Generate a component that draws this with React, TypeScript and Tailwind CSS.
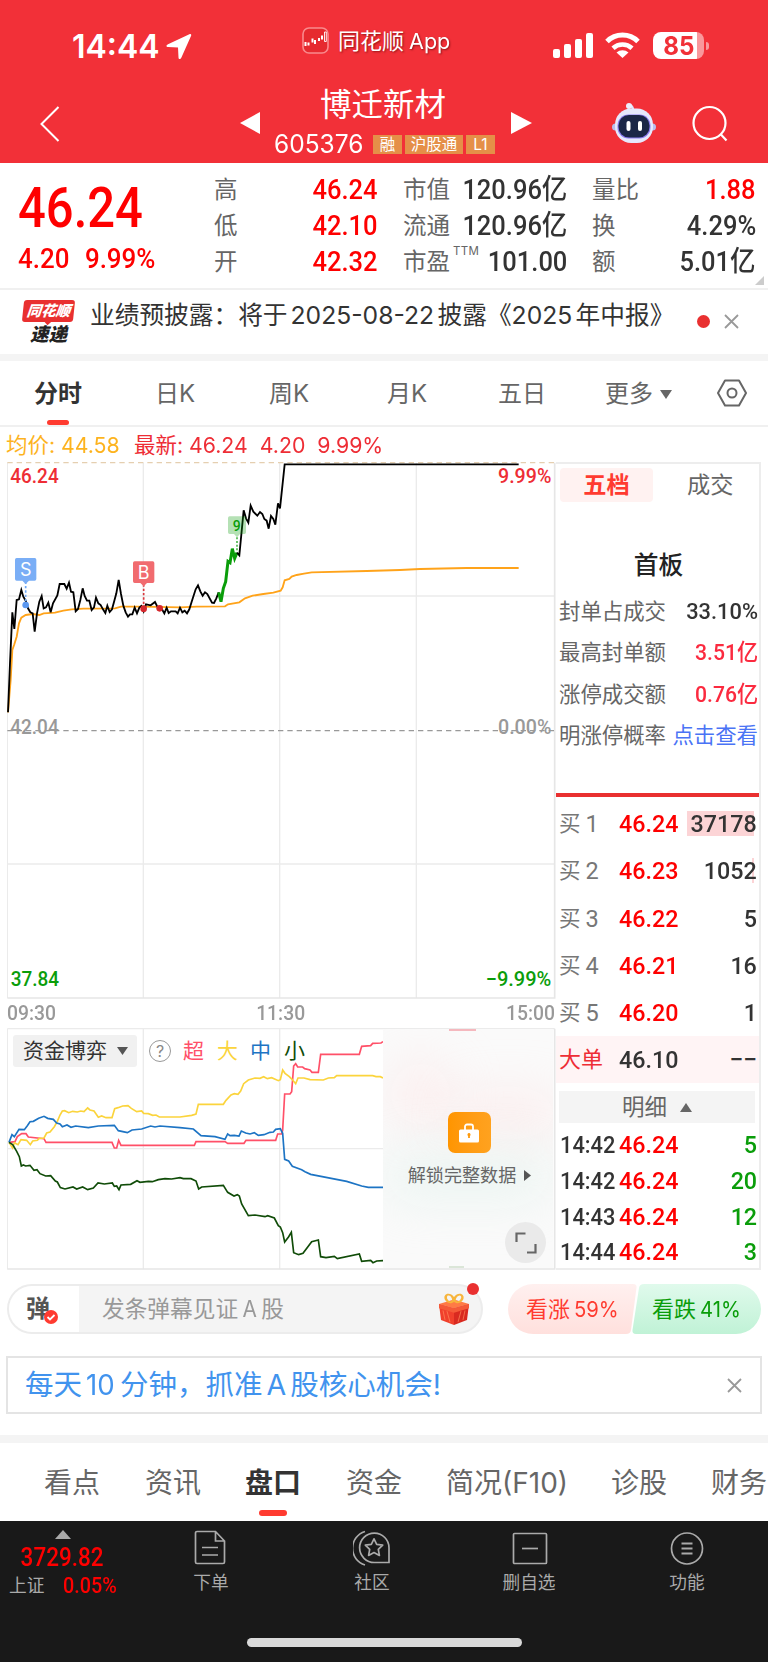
import clsx from "clsx";

const din = "[font-family:Roboto,'Noto_Sans_CJK_SC',sans-serif] font-medium";

const pricePath =
  "24,787 30,640 37,487 43,537 50,450 57,448 64,420 70,440 77,452 84,475 91,487 98,490 104,545 111,490 118,455 125,438 131,475 138,472 145,458 152,487 159,460 172,436 179,402 193,402 200,416 207,398 213,425 220,427 227,484 234,477 241,450 248,415 254,438 261,452 268,452 275,480 282,472 288,443 295,460 302,465 309,478 316,489 322,467 329,486 336,478 343,452 349,430 356,390 363,432 370,467 377,487 384,500 390,493 397,493 404,473 411,490 418,473 424,468 431,484 438,463 452,466 465,456 472,470 479,474 486,478 493,490 500,473 506,489 513,484 527,484 533,490 540,473 547,487 554,482 561,490 568,478 575,455 587,418 594,406 601,424 608,437 615,427 622,432 636,458 642,459 649,445 656,427";
const surgePath = "656,427 663,455 670,415 677,395 684,334 690,338 697,296 704,325 711,308";
const limitPath =
  "711,308 718,316 731,181 738,205 745,218 752,167 760,185 772,197 780,186 787,192 793,207 800,212 806,236 813,198 820,207 826,224 834,160 840,175 854,43 1556,43";
const avgPath =
  "24,787 32,690 37,600 43,583 50,560 57,520 64,503 77,495 98,492 118,495 131,490 165,488 190,482 215,478 250,476 345,475 363,470 430,470 540,472 590,470 675,469 684,463 718,457 735,445 758,437 790,432 820,428 842,422 848,412 854,391 868,387 875,380 890,375 912,371 935,367 1100,363 1200,360 1260,357 1400,354 1556,354";

const flows = [
  {
    color: "#ff5068",
    points:
      "27,547 45,545 52,530 65,521 78,521 85,531 132,536 138,547 336,547 343,564 350,564 356,541 363,556 583,556 588,545 675,545 683,550 732,550 738,541 827,541 833,522 845,522 848,510 854,402 870,402 875,395 881,318 887,311 893,321 908,321 914,326 930,330 936,337 955,337 962,283 1078,283 1085,259 1112,257 1118,250 1143,249 1149,245",
  },
  {
    color: "#fbd43c",
    points:
      "27,547 38,564 43,548 54,554 63,539 80,541 91,554 98,543 112,541 118,535 132,534 140,519 150,516 163,500 172,484 180,465 187,453 194,452 206,458 218,454 232,456 242,453 252,455 263,444 270,450 282,453 295,472 305,468 318,473 336,473 344,446 354,443 368,438 384,437 394,445 410,455 425,453 431,460 445,461 458,466 468,465 478,471 540,471 575,466 588,462 595,433 670,433 678,421 693,405 703,401 714,403 722,393 731,371 745,360 765,354 780,355 791,350 802,356 815,353 835,362 841,359 848,330 855,340 868,350 876,358 887,371 894,354 912,354 930,359 970,360 985,354 1003,353 1010,347 1118,347 1128,350 1141,350 1149,354",
  },
  {
    color: "#1d74c4",
    points:
      "27,547 36,524 43,530 57,508 73,509 82,497 90,485 100,484 116,475 132,469 143,475 160,478 170,489 180,492 187,500 201,495 213,502 227,498 265,503 295,498 343,496 355,512 382,518 396,510 425,507 452,498 465,501 480,498 540,503 580,507 603,527 645,530 675,538 683,522 690,527 703,526 717,528 724,513 737,519 750,522 763,518 775,526 792,524 810,517 820,516 827,508 841,506 848,520 854,598 866,603 877,619 905,629 915,635 932,643 1040,664 1085,678 1105,682 1149,682",
  },
  {
    color: "#104c08",
    points:
      "27,547 38,554 50,574 58,590 64,618 70,615 77,618 90,616 102,631 111,629 120,641 137,648 152,647 166,663 172,666 181,683 195,687 219,681 230,687 248,681 263,689 280,684 294,669 313,672 337,669 343,679 350,678 357,689 363,675 392,673 411,662 420,667 445,664 457,665 475,659 495,656 515,657 540,653 550,656 573,656 588,663 596,687 605,681 670,676 683,697 702,708 712,704 718,708 725,732 745,767 765,765 795,770 803,767 823,774 835,797 841,801 848,818 854,846 866,830 874,817 881,878 896,884 909,880 935,845 955,840 962,890 978,893 1003,889 1012,896 1078,882 1085,904 1112,901 1119,908 1130,903 1149,902",
  },
];

const limitInfo = [
  ["封单占成交", "33.10%", "scale-x-[.97] text-[#333]"],
  ["最高封单额", "3.51亿", "scale-x-[.94] text-[#fb2a3f]"],
  ["涨停成交额", "0.76亿", "scale-x-[.94] text-[#fb2a3f]"],
];

const bids = [
  ["1", "46.24", "37178"],
  ["2", "46.23", "1052"],
  ["3", "46.22", "5"],
  ["4", "46.21", "16"],
  ["5", "46.20", "1"],
];

const trades = [
  ["14:42", "5"],
  ["14:42", "20"],
  ["14:43", "12"],
  ["14:44", "3"],
];

function StatusBar() {
  return (
    <div className="flex h-[86px] items-start text-white">
      <div className="ml-[72px] mt-[31px] w-[94px] text-[32px] leading-[32px] font-semibold">
        <span className="inline-block origin-left">14:44</span>
      </div>
      <svg className="mt-[33px] h-[27px] w-[26px]" viewBox="0 0 26 27" fill="#fff">
        <path d="M23.4 1.2 2 11.3C-.2 12.4 .2 14 2.1 14.1L12 14.6 12.5 24.5C12.6 26.5 14.4 26.7 15.3 24.7L25 3C25.7 1.4 24.8 .6 23.4 1.2Z" />
      </svg>
      <svg className="mt-[27px] ml-[110px] h-[27px] w-[27px]" viewBox="0 0 27 27">
        <rect x="1" y="1" width="25" height="25" rx="6" fill="#e62a2f" stroke="#f98a8d" strokeWidth="1.6" />
        <g stroke="#fff" fill="none">
          <path d="M3.500 15v4M6.500 15.500v3M10.500 11.500v4M13 13v4M17 11v3M20 8.500v4" strokeWidth="2" />
          <path d="M22.500 5v9.500h1.800V5z" strokeWidth=".9" />
        </g>
      </svg>
      <div className="ml-[9px] mt-[26px] w-[215px] whitespace-nowrap text-[22px] leading-[30px] [text-shadow:1px_1px_2px_rgba(80,0,0,.6)]">
        同花顺<span className="ml-[5px] inline-block origin-left scale-x-[.98]">App</span>
      </div>
      <svg className="mt-[33px] h-[26px] w-[40px]" viewBox="0 0 40 26" fill="#fff">
        <rect x="0" y="16" width="7" height="9" rx="2" />
        <rect x="11" y="11" width="7" height="14" rx="2" />
        <rect x="22" y="6" width="7" height="19" rx="2" />
        <rect x="33" y="0" width="7" height="25" rx="2" />
      </svg>
      <svg className="ml-[12px] mt-[32px] h-[26px] w-[35px]" viewBox="0 0 35 26" fill="none" stroke="#fff">
        <path d="M2 9.500A22 22 0 0 1 33 9.500" strokeWidth="5" />
        <path d="M8 16.200A14 14 0 0 1 27 16.200" strokeWidth="4.600" />
        <path d="M17.500 26 11.500 20.500A9 9 0 0 1 23.500 20.500Z" fill="#fff" stroke="none" />
      </svg>
      <div className="ml-[13px] mt-[32px] flex h-[27px] w-[51px] items-center justify-center rounded-[8px] bg-linear-to-r from-white from-86% to-[#f9989c] to-86% text-[26px] leading-none font-bold text-[#f13037]">
        <span className="inline-block scale-x-[.93]">85</span>
      </div>
      <div className="ml-[2px] mt-[42px] h-[8px] w-[3px] rounded-r-full bg-[#f9989c]" />
    </div>
  );
}

function Robot() {
  return (
    <svg className="h-[42px] w-[44px]" viewBox="0 0 44 42">
      <path d="M21 8c0-3-1-4-3-5" stroke="#dfe3fb" strokeWidth="2.5" fill="none" />
      <circle cx="17" cy="4" r="3" fill="#eceefd" />
      <circle cx="3.5" cy="25" r="3.5" fill="#b9bdee" />
      <circle cx="40.5" cy="25" r="3.5" fill="#b9bdee" />
      <rect x="3" y="6.500" width="38" height="34.500" rx="16" fill="#e6e8fc" />
      <rect x="5.500" y="12.500" width="33" height="24" rx="11" fill="#8c7cf0" />
      <rect x="6.500" y="13" width="31" height="22.500" rx="10.500" fill="#1b2646" />
      <rect x="14.500" y="19" width="4" height="10" rx="2" fill="#fff" />
      <rect x="26" y="19" width="4" height="10" rx="2" fill="#fff" />
    </svg>
  );
}

function Header() {
  return (
    <header className="h-[163px] bg-[#f23038] text-white">
      <StatusBar />
      <div className="flex h-[77px] items-start">
        <svg className="mt-[19px] ml-[40px] h-[38px] w-[20px]" viewBox="0 0 20 38" fill="none" stroke="#fff" strokeWidth="2">
          <path d="M18.500 2 1.500 19 18.500 36" />
        </svg>
        <svg className="mt-[26px] ml-[180px] h-[22px] w-[20px]" viewBox="0 0 20 22" fill="#fff">
          <path d="M20 0v22L0 11z" />
        </svg>
        <div className="ml-[14px] w-[222px]">
          <div className="ml-[46px] text-[31.500px] leading-[38px]">博迁新材</div>
          <div className="mt-[10px] flex h-[20px] items-center">
            <span className="w-[99px] text-[25px] leading-[20px]">
              <span className="inline-block origin-left scale-x-[.98]">605376</span>
            </span>
            <div className="flex gap-[3px] text-[15.500px] leading-[19px]">
              <span className="w-[29px] bg-[#e58f48] text-center">融</span>
              <span className="w-[58px] bg-[#e58f48] text-center">沪股通</span>
              <span className="w-[29px] bg-[#e58f48] text-center">L1</span>
            </div>
          </div>
        </div>
        <svg className="mt-[26px] ml-[15px] h-[22px] w-[21px]" viewBox="0 0 21 22" fill="#fff">
          <path d="M0 0v22l21-11z" />
        </svg>
        <div className="mt-[16px] ml-[80px]">
          <Robot />
        </div>
        <svg className="mt-[19px] ml-[35px] h-[38px] w-[38px]" viewBox="0 0 38 38" fill="none" stroke="#fff" strokeWidth="2.2">
          <circle cx="18.5" cy="18" r="16" />
          <path d="m29.500 29 6 6.500" />
        </svg>
      </div>
    </header>
  );
}

function Stat({ label, value, red, sup }: { label: string; value: string; red?: boolean; sup?: string }) {
  return (
    <div className="flex h-[36px] items-center justify-between">
      <span className="flex items-start text-[23.500px] leading-[36px] text-[#666]">
        {label}
        {sup && <span className="mt-px ml-[3px] text-[11.500px] leading-[13px] tracking-[.3px]">{sup}</span>}
      </span>
      <span className={clsx(din, "origin-right scale-x-[.91] text-[28px] leading-[36px]", red ? "text-[#fe0000]" : "text-[#333]")}>
        {value}
      </span>
    </div>
  );
}

function Quote() {
  return (
    <section className="relative flex h-[127px] border-b-2 border-[#f0f0f0] pt-[9px]">
      <div className={clsx(din, "ml-[18px] w-[196px] text-[#fe0000]")}>
        <div className="mt-[8px] origin-left scale-x-[.89] text-[55px] leading-[56px]">46.24</div>
        <div className="mt-[5px] flex origin-left scale-x-[.91] gap-[17px] text-[28.500px] leading-[36px]">
          <span>4.20</span>
          <span>9.99%</span>
        </div>
      </div>
      <div className="w-[163px]">
        <Stat label="高" value="46.24" red />
        <Stat label="低" value="42.10" red />
        <Stat label="开" value="42.32" red />
      </div>
      <div className="ml-[26px] w-[164px]">
        <Stat label="市值" value="120.96亿" />
        <Stat label="流通" value="120.96亿" />
        <Stat label="市盈" value="101.00" sup="TTM" />
      </div>
      <div className="ml-[25px] w-[164px]">
        <Stat label="量比" value="1.88" red />
        <Stat label="换" value="4.29%" />
        <Stat label="额" value="5.01亿" />
      </div>
      <svg className="absolute right-[4px] bottom-[3px] h-[9px] w-[9px]" viewBox="0 0 9 9" fill="#ccc">
        <path d="M9 0v9H0z" />
      </svg>
    </section>
  );
}

function Close({ className }: { className?: string }) {
  return (
    <svg className={clsx("h-[15px] w-[15px]", className)} viewBox="0 0 15 15" stroke="#999" strokeWidth="1.8">
      <path d="m1 1 13 13M14 1 1 14" />
    </svg>
  );
}

function News() {
  return (
    <section className="flex h-[64px] items-start">
      <div className="ml-[23px] mt-[10px] w-[51px] font-black italic">
        <div className="relative z-10 h-[22px] -skew-x-6 rounded-[3px] bg-[#e93030] text-center text-[14.500px] leading-[21px] text-white">
          同花顺
          <div className="absolute bottom-[-2px] left-[23px] h-[6px] w-[6px] rotate-45 bg-[#e93030]" />
        </div>
        <div className="mt-[2px] text-center text-[18.500px] leading-[20px] text-[#222]">速递</div>
      </div>
      <div className="ml-[16px] mt-[6px] w-[605px] whitespace-nowrap text-[24.700px] leading-[38px] text-[#333]">
        业绩预披露：将于
        <span className="ml-[3px] mr-[3px] inline-block w-[144px]">2025-08-22</span>
        披露《<span className="mr-[3px] inline-block w-[61px]">2025</span>年中报》
      </div>
      <div className="mt-[25px] ml-[2px] h-[13px] w-[13px] rounded-full bg-[#e93030]" />
      <Close className="mt-[24px] ml-[14px]" />
    </section>
  );
}

function PeriodTabs() {
  return (
    <nav className="flex h-[73px] items-start border-t-[7px] border-b-2 border-b-[#f0f0f0] border-t-[#f4f4f4] text-[24px] leading-[66px] whitespace-nowrap text-[#666]">
      <div className="relative ml-[34px] w-[121px] font-bold text-[#333]">
        分时
        <div className="absolute left-[13px] top-[59px] h-[5px] w-[22px] rounded-full bg-[#ff3b30]" />
      </div>
      <div className="w-[114px]">日K</div>
      <div className="w-[118px]">周K</div>
      <div className="w-[111px]">月K</div>
      <div className="w-[107px]">五日</div>
      <div className="flex w-[112px] items-center">
        更多
        <svg className="ml-[7px] h-[9px] w-[12px]" viewBox="0 0 12 9" fill="#666">
          <path d="M0 0h12L6 9z" />
        </svg>
      </div>
      <svg className="mt-[18px] h-[28px] w-[30px]" viewBox="0 0 30 28" fill="none" stroke="#666" strokeWidth="2">
        <path d="M8 1.500h14L29 14l-7 12.500H8L1 14z" strokeLinejoin="round" />
        <circle cx="15" cy="14" r="4.5" />
      </svg>
    </nav>
  );
}

function PriceChart() {
  return (
    <svg className="block h-[538px] w-[549px]" viewBox="21 36 1647 1614" fill="none">
      <g stroke="#ebebeb" strokeWidth="4">
        <path d="M22 38V1644M430 38V1644M839 38V1644M1249 38V1644M22 438H1662M22 1242H1662" />
        <path d="M22 1644H1662M1664 38V1646" strokeWidth="5" stroke="#e6e6e6" />
      </g>
      <path d="M22 38H1662" stroke="#e5cfb0" strokeWidth="4" strokeDasharray="16 12" />
      <path d="M22 842H1662" stroke="#999" strokeWidth="4" strokeDasharray="16 12" />
      <polyline points={avgPath} stroke="#ffa31a" strokeWidth="5.5" />
      <polyline points={pricePath} stroke="#000" strokeWidth="5.5" />
      <polyline points={surgePath} stroke="#0a9d0a" strokeWidth="9" />
      <polyline points={limitPath} stroke="#000" strokeWidth="5.5" />

      <path d="M77 395V456" stroke="#6fa8f5" strokeWidth="5" strokeDasharray="7 6" />
      <circle cx="77" cy="465" r="10" fill="#5b98f0" />
      <path d="M50 324h54a5 5 0 0 1 5 5v58a5 5 0 0 1-5 5H87l-10 10-10-10H50a5 5 0 0 1-5-5v-58a5 5 0 0 1 5-5z" fill="#7aaef6" />
      <path d="M431 403V464" stroke="#d8383d" strokeWidth="5" strokeDasharray="7 6" />
      <circle cx="431" cy="476" r="10" fill="#d5282d" />
      <circle cx="479" cy="475" r="10" fill="#d5282d" />
      <path d="M404 334h54a5 5 0 0 1 5 5v55a5 5 0 0 1-5 5H441l-10 10-10-10H404a5 5 0 0 1-5-5v-55a5 5 0 0 1 5-5z" fill="#f16b6f" />
      <path d="M711 262V306" stroke="#4cb84c" strokeWidth="5" strokeDasharray="6 5" />
      <path d="M689 199h44a5 5 0 0 1 5 5v43a5 5 0 0 1-5 5H720l-9 10-9-10H689a5 5 0 0 1-5-5v-43a5 5 0 0 1 5-5z" fill="#0a9d0a" fillOpacity=".3" />
      <g className="[font-family:Inter,sans-serif]" fill="#fff" fontSize="54" textAnchor="middle">
        <text x="77" y="378">S</text>
        <text x="431" y="387">B</text>
      </g>
      <text className={din} x="710" y="242" fill="#0a9d0a" fontSize="42" textAnchor="middle">9</text>

      <g className={din} fontSize="61">
        <text x="31" y="99" textLength="145" lengthAdjust="spacingAndGlyphs" fill="#ee2d35">46.24</text>
        <text x="1494" y="99" textLength="160" lengthAdjust="spacingAndGlyphs" fill="#ee2d35">9.99%</text>
        <text x="31" y="852" textLength="145" lengthAdjust="spacingAndGlyphs" fill="#999">42.04</text>
        <text x="1494" y="852" textLength="160" lengthAdjust="spacingAndGlyphs" fill="#999">0.00%</text>
        <text x="32" y="1607" textLength="145" lengthAdjust="spacingAndGlyphs" fill="#0a9d0a">37.84</text>
        <text x="1457" y="1607" textLength="197" lengthAdjust="spacingAndGlyphs" fill="#0a9d0a">−9.99%</text>
      </g>
    </svg>
  );
}

function FlowPanel() {
  return (
    <div className="relative h-[242px] w-[549px]">
      <svg className="absolute inset-0 h-[242px] w-[549px]" viewBox="21 204 1647 726" fill="none">
        <path d="M22 206H1664M22 566H1149M22 206V928M430 206V928M839 206V928" stroke="#ebebeb" strokeWidth="4" />
        <path d="M22 927H1664V206" stroke="#e6e6e6" strokeWidth="5" />
        {flows.map((flow) => (
          <polyline key={flow.color} points={flow.points} stroke={flow.color} strokeWidth="5" />
        ))}
      </svg>

      <div className="absolute top-[7px] left-[6px] flex h-[32px] items-center text-[21px] leading-[32px]">
        <div className="flex h-[32px] w-[124px] items-center rounded-[3px] bg-[#f1f1f1] pl-[10px] text-[#333]">
          资金博弈
          <svg className="ml-[10px] h-[8px] w-[11px]" viewBox="0 0 11 8" fill="#555">
            <path d="M0 0h11L5.500 8z" />
          </svg>
        </div>
        <div className="ml-[12px] flex h-[22px] w-[22px] items-center justify-center rounded-full border-[1.500px] border-[#999] text-[16px] leading-none text-[#888]">
          ?
        </div>
        <span className="ml-[12px] w-[34px] text-[#ff5068]">超</span>
        <span className="w-[33px] text-[#fbd43c]">大</span>
        <span className="w-[34px] text-[#1d74c4]">中</span>
        <span className="text-[#104c08]">小</span>
      </div>

      {/* blurred preview behind the paywall */}
      <div className="absolute top-[1px] right-[3px] bottom-[2px] flex w-[170px] flex-col items-center overflow-hidden bg-[#fafafa]">
        <div className="absolute top-[30px] left-[5px] h-[70px] w-[65px] rounded-full bg-[#ffdede]/40 blur-xl" />
        <div className="absolute top-[64px] left-[70px] h-[40px] w-[110px] rounded-full bg-[#ffdede]/45 blur-xl" />
        <div className="absolute top-[122px] left-0 h-[50px] w-[170px] rounded-full bg-[#dcefe9]/45 blur-xl" />
        <div className="absolute top-0 left-[66px] h-[2px] w-[27px] bg-[#f5b8be]" />
        <div className="absolute bottom-0 left-[66px] h-[2px] w-[15px] bg-[#dbe6d8]" />
        <div className="relative mt-[83px] ml-[2px] flex h-[41px] w-[43px] items-center justify-center rounded-[7px] bg-linear-to-r from-[#ff9500] to-[#ffa21f]">
          <svg className="h-[20px] w-[20px]" viewBox="0 0 20 20">
            <path d="M6 8V3.500A2 2 0 0 1 8 1.500h4a2 2 0 0 1 2 2V8" fill="none" stroke="#fff" strokeWidth="1.8" />
            <rect x="0" y="6.500" width="20" height="13" rx="1.5" fill="#fff" />
            <path d="M10 10a1.600 1.600 0 0 1 .9 2.900V15H9.100v-2.100A1.600 1.600 0 0 1 10 10z" fill="#ff9a0c" />
          </svg>
        </div>
        <div className="relative mt-[9px] ml-[3px] flex items-center text-[18.100px] leading-[26px] whitespace-nowrap text-[#666]">
          解锁完整数据
          <svg className="ml-[8px] h-[11px] w-[7px]" viewBox="0 0 7 11" fill="#555">
            <path d="M0 0l7 5.500L0 11z" />
          </svg>
        </div>
        <div className="absolute right-[7px] bottom-[5px] flex h-[41px] w-[41px] items-center justify-center rounded-full bg-[#eaeaea]">
          <svg className="h-[22px] w-[22px]" viewBox="0 0 22 22" fill="none" stroke="#666" strokeWidth="2.2">
            <path d="M1.500 10V1.500H10.500M20.500 12v8.500H12" />
          </svg>
        </div>
      </div>
    </div>
  );
}

function OrderBook() {
  return (
    <aside className={clsx(din, "h-[808px] w-[205px] border-y-2 border-r-2 border-[#ededed]")}>
      <div className="flex pt-[4px] pl-[4px] text-[23.200px] leading-[34px] font-normal">
        <div className="w-[93px] rounded-[4px] bg-[#fff2f1] text-center font-bold text-[#ff3b30]">五档</div>
        <div className="ml-[34px] text-[#666]">成交</div>
      </div>
      <div className="mt-[46px] pl-[2px] text-center text-[24.700px] leading-[36px] text-[#222]">首板</div>
      <div className="mt-[7px] pr-[1px] pl-[3px] text-[21.400px] leading-[41.300px]">
        {limitInfo.map(([label, value, color]) => (
          <div key={label} className="flex justify-between">
            <span className="font-normal text-[#666]">{label}</span>
            <span className={clsx("origin-right text-[22.500px]", color)}>{value}</span>
          </div>
        ))}
        <div className="flex justify-between font-normal whitespace-nowrap">
          <span className="text-[#666]">明涨停概率</span>
          <span className="text-[#4a73f5]">点击查看</span>
        </div>
      </div>
      <div className="mt-[37px] h-[4px] bg-[#e93030]" />

      <div className="pt-[3px]">
        {bids.map(([level, price, volume]) => (
          <div key={level} className="flex h-[47.200px] items-center pl-[3px] text-[24.500px] leading-[47px]">
            <span className="w-[60px] text-[21.500px] font-normal text-[#777]">
              买<span className="relative top-[1px] ml-[5px] text-[23.500px]">{level}</span>
            </span>
            <span className="w-[66px] origin-left scale-x-[.95] text-[#fe0000]">{price}</span>
            <span className="relative flex-1 pr-[2px] text-right text-[#333]">
              {level === "1" && <span className="absolute top-[11px] right-[5px] h-[25px] w-[67px] bg-[#fcd4d6]" />}
              {level === "2" && <span className="absolute top-[11px] right-[5px] h-[25px] w-[2px] bg-[#fcd4d6]" />}
              <span className="relative inline-block origin-right scale-x-[.95]">{volume}</span>
            </span>
          </div>
        ))}
        <div className="flex h-[47px] items-center bg-[#fff4f5] pl-[3px] text-[24.500px] leading-[47px]">
          <span className="w-[60px] text-[22px] font-normal text-[#ee2d35]">大单</span>
          <span className="w-[66px] origin-left scale-x-[.95] text-[#333]">46.10</span>
          <span className="flex-1 pr-[2px] text-right text-[#333]">−−</span>
        </div>
      </div>

      <div className="mt-[8px] ml-[3px] flex h-[32px] w-[196px] items-center justify-center bg-[#f4f4f4] text-[22.500px] leading-[32px] font-normal text-[#666]">
        明细
        <svg className="ml-[13px] h-[9px] w-[12px]" viewBox="0 0 12 9" fill="#666">
          <path d="M6 0l6 9H0z" />
        </svg>
      </div>
      <div className="mt-[4px]">
        {trades.map(([time, volume]) => (
          <div key={time + volume} className="flex h-[35.800px] items-center pl-[4px] text-[24.500px] leading-[36px]">
            <span className="w-[59px] origin-left scale-x-[.89] text-[#333]">{time}</span>
            <span className="w-[66px] origin-left scale-x-[.95] text-[#fe0000]">46.24</span>
            <span className="flex-1 origin-right scale-x-[.95] pr-[2px] text-right text-[#0a9d0a]">{volume}</span>
          </div>
        ))}
      </div>
    </aside>
  );
}

function Gift() {
  return (
    <svg className="h-[32px] w-[30px]" viewBox="0 0 30 44" preserveAspectRatio="none">
      <path d="M0 15 15 9 30 15 15 21z" fill="#ff7a45" />
      <path d="M0 15 15 21V44L2 37z" fill="#f0402c" />
      <path d="M30 15 15 21V44L28 37z" fill="#d92a20" />
      <path d="M0 15 15 21v6L0 21zM30 15 15 21v6l15-6z" fill="#f45a38" />
      <path d="M8 25l3 15M4 24l2 13M22 25l-3 15M26 24l-2 13" stroke="#ff8a5c" strokeWidth=".8" />
      <g fill="none" stroke="#f7b53c" strokeWidth="2.6">
        <ellipse cx="10.5" cy="7.5" rx="3.6" ry="5.5" transform="rotate(-20 10.5 7.5)" />
        <ellipse cx="19.5" cy="7.5" rx="3.6" ry="5.5" transform="rotate(20 19.5 7.5)" />
      </g>
    </svg>
  );
}

function Barrage() {
  return (
    <section className="flex h-[50px] pl-[7px]">
      <div className="relative flex w-[476px] items-center rounded-full border-2 border-[#ececec] bg-[#f4f4f4] text-[22px]">
        <div className="relative h-[46px] w-[70px] rounded-l-full bg-white pl-[17px] text-[24px] leading-[45px] font-bold text-[#555]">
          弹
          <svg className="absolute top-[24px] left-[35px] h-[14px] w-[14px]" viewBox="0 0 14 14">
            <circle cx="7" cy="7" r="7" fill="#ff3b30" />
            <path d="m3.500 7 2.500 2.500 4.500-4.500" stroke="#fff" strokeWidth="1.8" fill="none" />
          </svg>
        </div>
        <div className="ml-[23px] w-[337px] text-[22.700px] leading-[48px] text-[#999]">
          发条弹幕见证<span className="mx-[4px] inline-block w-[15px] scale-x-[.92]">A</span>股
        </div>
        <Gift />
        <div className="absolute -top-[3px] right-[2px] h-[12px] w-[12px] rounded-full bg-[#e93030]" />
      </div>
      <div className="relative ml-[25px] flex h-[50px] w-[253px] text-[22px] leading-[51px] whitespace-nowrap">
        <svg className="absolute inset-0 h-[50px] w-[253px]" viewBox="0 0 253 50">
          <defs>
            <linearGradient id="bull" x1="0" y1="0" x2="0" y2="1">
              <stop offset="0" stopColor="#fff0ef" />
              <stop offset="1" stopColor="#ffe0dd" />
            </linearGradient>
            <linearGradient id="bear" x1="0" y1="0" x2="0" y2="1">
              <stop offset="0" stopColor="#e0faec" />
              <stop offset="1" stopColor="#c0f2d6" />
            </linearGradient>
          </defs>
          <path d="M25 0H125Q129 0 128.500 3.500L123 46Q122.500 50 118 50H25A25 25 0 0 1 25 0z" fill="url(#bull)" />
          <path d="M136 0H228A25 25 0 0 1 228 50H128Q124 50 124.500 46L131 4Q131.500 0 136 0z" fill="url(#bear)" />
        </svg>
        <span className="relative ml-[18px] w-[126px] text-[#ff3b30]">
          看涨<span className="ml-[4px] inline-block origin-left scale-x-[.92]">59%</span>
        </span>
        <span className="relative text-[#0a9d0a]">
          看跌<span className="ml-[4px] inline-block origin-left scale-x-[.92]">41%</span>
        </span>
      </div>
    </section>
  );
}

function BottomTabs() {
  return (
    <nav className="flex h-[86px] overflow-hidden border-t-[8px] border-[#f4f4f4] pl-[44px] text-[28px] leading-[80px] whitespace-nowrap text-[#666]">
      <span className="w-[101px] shrink-0">看点</span>
      <span className="w-[100px] shrink-0">资讯</span>
      <span className="relative w-[101px] shrink-0 font-bold text-[#333]">
        盘口
        <span className="absolute top-[67px] left-[14px] h-[6px] w-[28px] rounded-[3px] bg-[#ff3b30]" />
      </span>
      <span className="w-[100px] shrink-0">资金</span>
      <span className="w-[165px] shrink-0">
        简况<span className="inline-block origin-left">(F10)</span>
      </span>
      <span className="w-[100px] shrink-0">诊股</span>
      <span className="shrink-0">财务</span>
    </nav>
  );
}

function BottomBar() {
  return (
    <footer className="relative h-[141px] bg-[#191919] text-[17.700px] leading-[24px] text-[#aaa]">
      <div className="flex">
        <div className="flex w-[126px] flex-col items-center pt-[9px]">
          <svg className="h-[9px] w-[16px]" viewBox="0 0 16 9" fill="#aaa">
            <path d="M8 0l8 9H0z" />
          </svg>
          <div className={clsx(din, "mt-[6px] -ml-px scale-x-[.9] text-[25px] leading-[26px] text-[#fe0000]")}>3729.82</div>
          <div className="mt-[3px] flex w-[108px] items-center justify-between">
            <span>上证</span>
            <span className={clsx(din, "origin-right scale-x-[.9] text-[22px] text-[#fe0000]")}>0.05%</span>
          </div>
        </div>
        <div className="ml-[44px] flex w-[82px] flex-col items-center pt-[9px]">
          <svg className="mr-[3px] h-[36px] w-[32px]" viewBox="0 0 32 36" fill="none" stroke="#aaa" strokeWidth="1.7">
            <path d="M1.500 3a1.500 1.500 0 0 1 1.500-1.500H21.500L30.500 11v21a1.500 1.500 0 0 1-1.500 1.500H3a1.500 1.500 0 0 1-1.500-1.500zM21.500 1.500V11h9M8 17.500h16M8 25h16" />
          </svg>
          <span className="mt-[5px]">下单</span>
        </div>
        <div className="ml-[79px] flex w-[82px] flex-col items-center pt-[9px]">
          <svg className="mr-[2px] h-[36px] w-[37px]" viewBox="0 0 37 36" fill="none" stroke="#aaa" strokeWidth="1.7">
            <path d="M12 1.500A17.500 17.500 0 0 0 12 35M36 32.500V18A14.700 14.700 0 1 0 21.500 32.500z" />
            <path d="m21 8.800 2.700 5.500 6 .9-4.400 4.200 1.100 6-5.400-2.800-5.400 2.800 1.100-6-4.400-4.200 6-.9z" strokeLinejoin="round" />
          </svg>
          <span className="mt-[5px]">社区</span>
        </div>
        <div className="ml-[75px] flex w-[82px] flex-col items-center pt-[9px]">
          <svg className="ml-[2px] h-[36px] w-[36px]" viewBox="0 0 36 36" fill="none" stroke="#aaa" strokeWidth="1.7">
            <rect x="1.5" y="3.5" width="33" height="30" rx="1" />
            <path d="M10 18.500h16" />
          </svg>
          <span className="mt-[5px]">删自选</span>
        </div>
        <div className="ml-[76px] flex w-[82px] flex-col items-center pt-[9px]">
          <svg className="h-[36px] w-[34px]" viewBox="0 0 34 36" fill="none" stroke="#aaa" strokeWidth="1.7">
            <circle cx="17" cy="18.5" r="15.5" />
            <path d="M11.500 13.500h11M11.500 18.500h11M11.500 23.500h11" strokeWidth="1.9" />
          </svg>
          <span className="mt-[5px]">功能</span>
        </div>
      </div>
      <div className="absolute top-[117px] left-[247px] h-[9px] w-[275px] rounded-full bg-[#d9d9d9]" />
    </footer>
  );
}

export default function App() {
  return (
    <div className="h-[1662px] w-[768px] overflow-hidden bg-white [font-family:Inter,'Noto_Sans_CJK_SC',sans-serif]">
      <Header />
      <Quote />
      <News />
      <PeriodTabs />
      <div className="flex h-[30px] gap-[13px] pl-[6px] text-[21.500px] leading-[36px] whitespace-nowrap">
        <span className="w-[115px] text-[#fdb31e]">
          均价: <span className="inline-block origin-left scale-x-[.99]">44.58</span>
        </span>
        <span className="text-[#ee2d35]">
          最新: <span className="inline-block origin-left scale-x-[.99]">46.24&nbsp; 4.20&nbsp; 9.99%</span>
        </span>
      </div>
      <div className="flex pt-[5px] pl-[7px]">
        <div className="w-[549px]">
          <PriceChart />
          <div className={clsx(din, "flex h-[28px] justify-between text-[21px] leading-[27px] text-[#999]")}>
            <span className="w-[200px] origin-left scale-x-[.92]">09:30</span>
            <span className="scale-x-[.92]">11:30</span>
            <span className="w-[201px] origin-right scale-x-[.92] pr-[1px] text-right">15:00</span>
          </div>
          <FlowPanel />
        </div>
        <OrderBook />
      </div>
      <div className="h-[14px]" />
      <Barrage />
      <div className="mx-[6px] mt-[22px] flex h-[58px] items-center justify-between border-2 border-[#e4e4e4] pr-[18px] pl-[17px] text-[28.500px] leading-[54px] whitespace-nowrap text-[#4193ee]">
        <span>
          每天<span className="mx-[4px] inline-block w-[30px]"><span className="inline-block origin-left scale-x-[.97]">10</span></span>
          分钟，抓准<span className="mx-[4px]">A</span>股核心机会!
        </span>
        <Close />
      </div>
      <div className="h-[21px]" />
      <BottomTabs />
      <BottomBar />
    </div>
  );
}
